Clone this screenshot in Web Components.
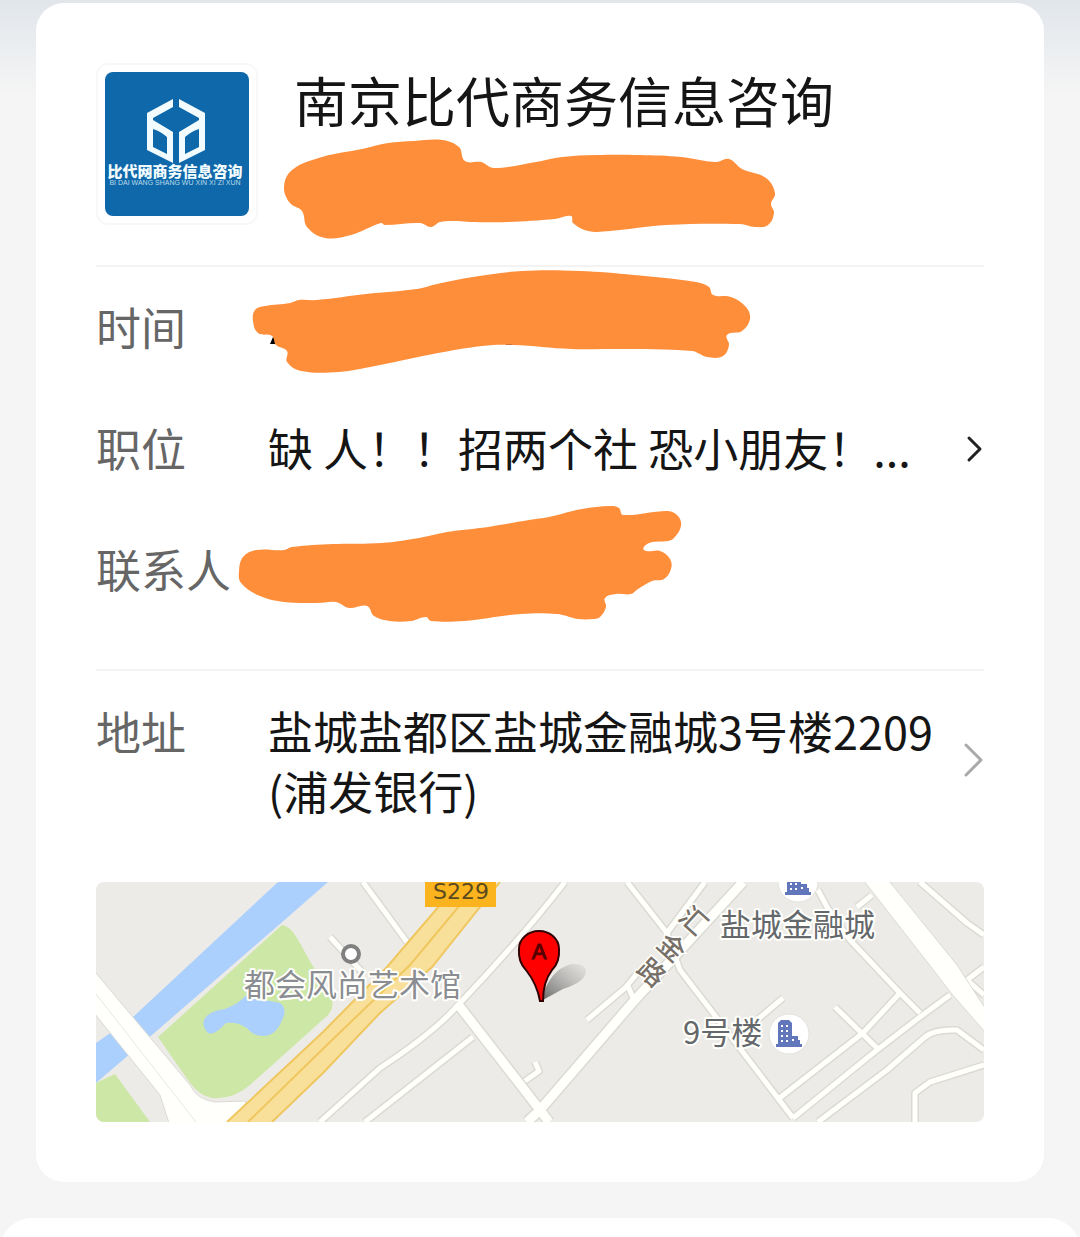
<!DOCTYPE html>
<html lang="zh-CN">
<head>
<meta charset="UTF-8">
<meta name="viewport" content="width=device-width, initial-scale=1">
<title>面试详情</title>
<style>
    body {
        margin: 0;
        background: #f5f5f5 linear-gradient(#e1e6eb, #f5f5f5 96px) no-repeat;
        color: #151515;
        font-family: "Noto Sans CJK SC", sans-serif;
    }
</style>
</head>
<body>
<interview-page></interview-page>

<script>
class CompanyLogo extends HTMLElement {
    constructor() {
        super();
        this.attachShadow({ mode: 'open' });
        this.shadowRoot.innerHTML = `
            <style>
                :host {
                    display: block;
                    box-sizing: border-box;
                    width: 162px;
                    height: 162px;
                    padding: 7px;
                    border: 2px solid #f8f8f8;
                    border-radius: 12px;
                    flex: none;
                }

                svg {
                    display: block;
                    width: 100%;
                    height: 100%;
                    border-radius: 8px;
                }
            </style>
            <svg viewBox="0 0 144 144">
                <rect width="144" height="144" fill="#0f68a9"/>
                <g fill="#f2fcff" fill-rule="evenodd">
                    <path d="M68 27V35L48 46V48L68 60V91L42 78V41ZM48 57V75L62 82V65Q55 59 48 57Z"/>
                    <path d="M74 27V35L94 46V48L74 60V91L100 78V41ZM94 57V75L80 82V65Q87 59 94 57Z"/>
                </g>
                <text x="70" y="105" text-anchor="middle" font-size="15" font-weight="900" fill="#f2fcff">比代网商务信息咨询</text>
                <text x="70" y="113" text-anchor="middle" font-family="Liberation Sans, sans-serif" font-size="7" fill="#b9dced">BI DAI WANG SHANG WU XIN XI ZI XUN</text>
            </svg>
        `;
    }
}

// Marker outlines: x,y pairs relative to the row that they cover
const SCRIBBLES = {
    company: [188,124, 196,107, 226,94, 266,86, 292,80, 318,78, 346,77, 363,84, 369,98, 385,99, 398,105, 440,99, 466,94, 500,92, 544,92, 585,94, 620,99, 633,96, 646,106, 670,115, 679,130, 675,141, 678,150, 672,162, 659,164, 644,161, 570,162, 514,168, 492,168, 477,160, 475,153, 459,156, 411,159, 374,159, 362,158, 344,159, 335,164, 324,160, 289,162, 285,160, 255,172, 229,175, 211,164, 206,148, 194,140],
    time: [157,22, 159,11, 169,7, 194,4, 203,1, 221,1, 270,-5, 321,-10, 341,-15, 377,-22, 426,-28, 484,-28, 538,-24, 600,-17, 613,-12, 617,-4, 635,-2, 650,8, 654,20, 646,32, 631,36, 633,46, 627,57, 611,58, 596,52, 520,50, 475,50, 417,46, 386,47, 337,55, 279,67, 243,73, 205,72, 191,63, 191,52, 180,46, 176,37, 162,34],
    contact: [143,30, 147,16, 160,9, 188,9, 196,6, 237,3, 286,2, 323,-3, 351,-9, 392,-14, 433,-21, 453,-24, 486,-32, 515,-35, 523,-33, 527,-26, 572,-30, 582,-25, 585,-15, 578,-3, 572,0, 553,2, 548,9, 564,10, 574,18, 575,28, 568,38, 556,40, 542,48, 535,53, 520,53, 509,57, 510,66, 504,76, 498,78, 482,78, 461,73, 425,73, 368,80, 335,80, 330,76, 315,80, 294,80, 278,75, 271,65, 253,67, 240,61, 221,62, 188,61, 164,55, 145,42]
};

class InkScribble extends HTMLElement {
    constructor() {
        super();
        this.attachShadow({ mode: 'open' });
    }

    connectedCallback() {
        const shape = this.getAttribute('shape');
        this.shadowRoot.innerHTML = `
            <style>
                :host {
                    display: block;
                    position: absolute;
                    top: 0;
                    left: 0;
                    pointer-events: none;
                }

                svg {
                    display: block;
                    width: 1px;
                    height: 1px;
                    overflow: visible;
                }
            </style>
            <svg aria-hidden="true">
                ${shape === 'time' ? '<path d="M174 45 177 38 186 45ZM410 44H418V46H410Z"/>' : ''}
                <path fill="#ff8e3a" d="${this.outline(SCRIBBLES[shape])}"/>
            </svg>
        `;
    }

    // closed smooth curve through all the points
    outline(flat) {
        const count = flat.length / 2;
        const at = i => {
            const k = (i + count) % count;
            return [flat[k * 2], flat[k * 2 + 1]];
        };
        const handle = (from, to, length) => {
            const dx = to[0] - from[0];
            const dy = to[1] - from[1];
            const k = length * 0.36 / Math.hypot(dx, dy);
            return [dx * k, dy * k];
        };
        let d = `M${at(0)}`;
        for (let i = 0; i < count; i++) {
            const [p0, p1, p2, p3] = [at(i - 1), at(i), at(i + 1), at(i + 2)];
            const length = Math.hypot(p2[0] - p1[0], p2[1] - p1[1]);
            const a = handle(p0, p2, length);
            const b = handle(p1, p3, length);
            d += `C${p1[0] + a[0]} ${p1[1] + a[1]} ${p2[0] - b[0]} ${p2[1] - b[1]} ${p2}`;
        }
        return d + 'Z';
    }
}

class InfoRow extends HTMLElement {
    constructor() {
        super();
        this.attachShadow({ mode: 'open' });
    }

    connectedCallback() {
        const href = this.getAttribute('href');
        const tag = href ? 'a' : 'div';
        this.shadowRoot.innerHTML = `
            <style>
                :host {
                    display: block;
                    position: relative;
                    font-size: 45px;
                    line-height: 60px;
                }

                .row {
                    display: flex;
                    color: inherit;
                    text-decoration: none;
                    min-height: 60px;
                }

                .label {
                    flex: none;
                    width: 172px;
                    color: #666;
                    white-space: nowrap;
                }

                .value {
                    flex: 1;
                    min-width: 0;
                }

                :host([single]) .value {
                    overflow: hidden;
                    white-space: nowrap;
                }

                svg {
                    flex: none;
                    align-self: center;
                    margin: 4px 0 0 24px;
                    fill: none;
                    stroke: #222;
                    stroke-width: 3;
                    stroke-linecap: round;
                    stroke-linejoin: round;
                }

                :host([muted]) svg {
                    stroke: #aaa;
                }

                ::slotted(ink-scribble) {
                    top: 2px;
                }
            </style>
            <${tag} class="row" ${href ? `href="${href}"` : ''}>
                <span class="label">${this.getAttribute('label')}</span>
                <span class="value"><slot></slot></span>
                ${href ? this.arrow() : ''}
            </${tag}>
            <slot name="cover"></slot>
        `;
    }

    arrow() {
        return this.hasAttribute('muted')
            ? '<svg width="20" height="40"><path d="M2 2 17 17 2 32"/></svg>'
            : '<svg width="20" height="32"><path d="M5 4 16 15 5 26"/></svg>';
    }
}

class AddressMap extends HTMLElement {
    constructor() {
        super();
        this.attachShadow({ mode: 'open' });
        this.shadowRoot.innerHTML = `
            <style>
                :host {
                    display: block;
                    height: 240px;
                    border-radius: 8px;
                    overflow: hidden;
                    background: #ecebe7;
                }

                svg {
                    display: block;
                    width: 100%;
                    height: 100%;
                }

                .edge, .road {
                    fill: none;
                    stroke-linejoin: round;
                }

                .edge {
                    stroke: #dcdad4;
                }

                .road {
                    stroke: #fffffc;
                }

                .place {
                    font-size: 31px;
                    stroke: #fffffc;
                    stroke-width: 4;
                    stroke-linejoin: round;
                    paint-order: stroke;
                }

                .street {
                    font-size: 27px;
                    font-weight: 500;
                    text-anchor: middle;
                    fill: #777069;
                    stroke: #fffffc;
                    stroke-width: 3;
                    paint-order: stroke;
                }
            </style>
            <svg viewBox="96 882 888 240" preserveAspectRatio="xMidYMid slice">
                <defs>
                    <linearGradient id="shade" x1="0" y1="1" x2="1" y2="0">
                        <stop offset="0" stop-color="#555" stop-opacity=".9"/>
                        <stop offset="1" stop-color="#999" stop-opacity=".1"/>
                    </linearGradient>
                    <g id="lanes">
                        <path d="M565 882Q520 940 460 1003Q435 1032 380 1068L320 1122"/>
                        <path d="M473 1037 365 1122"/>
                        <path d="M363 882 407 942"/>
                        <path d="M330 937 363 973"/>
                        <path d="M627 882 667 933 680 970 713 1013 793 1118"/>
                        <path d="M705 882 667 933"/>
                        <path d="M587 1020 625 988 640 970"/>
                        <path d="M627 984 634 1000"/>
                        <path d="M525 1081 539 1071 535 1062"/>
                        <path d="M920 882 967 923 984 935"/>
                        <path d="M818 890 827 907 850 940 900 993 920 1013"/>
                        <path d="M857 907 872 895"/>
                        <path d="M900 993 863 1033 777 1100"/>
                        <path d="M835 1007 877 1048"/>
                        <path d="M950 995 920 1017 877 1050 793 1118"/>
                        <path d="M818 1122 887 1070 925 1037Q934 1029 957 1030L984 1050"/>
                        <path d="M915 1122V1093L930 1082 984 1065"/>
                        <path d="M984 967 967 980 984 995"/>
                        <path d="M757 1020 783 998"/>
                    </g>
                    <g id="avenues">
                        <path d="M457 1003 540 1110 549 1122"/>
                        <path d="M527 1122 540 1110 633 1002 743 882"/>
                    </g>
                </defs>

                <path fill="#acd0fd" d="M278 882H328L280 924 152 1035 96 1083V1043L133 1017Z"/>
                <path fill="#cde7a6" d="M282 925Q290 926 297 938L332 1000Q334 1008 328 1015L250 1085Q232 1100 212 1098 200 1096 190 1083L158 1037Z"/>
                <path fill="#cde7a6" d="M96 1083 115 1074 150 1122H96Z"/>
                <path fill="#acd0fd" d="M204 1020Q208 1011 225 1009 240 1003 245 996L280 1003Q288 1009 282 1020 276 1036 263 1036 253 1036 247 1028 238 1022 226 1023 214 1036 208 1033 202 1027 204 1020Z"/>

                <g class="edge">
                    <use href="#lanes" stroke-width="8"/>
                    <use href="#avenues" stroke-width="12"/>
                </g>
                <g class="road">
                    <use href="#lanes" stroke-width="5"/>
                    <use href="#avenues" stroke-width="9"/>
                </g>
                <g fill="#fffffc" stroke="#dcdad4">
                    <path d="M95 972 190 1085Q197 1100 215 1102L246 1101 240 1123H169L160 1095 95 1014Z"/>
                    <path d="M864 881H889L957 965 985 1008V1032L951 993 935 972Z"/>
                </g>
                <path d="M96 994 196 1122" stroke="#e8e6e1"/>

                <path fill="#f8e09a" d="M227 1122 323 1032 387 967 440 905 500 882 432 967 380 1013 323 1073 272 1122Z"/>
                <g fill="none" stroke="#f0c75e" stroke-width="2">
                    <path d="M227 1122 323 1032 387 967 440 905"/>
                    <path d="M272 1122 323 1073 380 1013 432 967 500 882"/>
                    <path d="M248 1122 330 1042 410 965 460 905"/>
                </g>
                <rect x="425" y="874" width="71" height="33" fill="#fbb41d"/>
                <text x="461" y="899" text-anchor="middle" font-family="DejaVu Sans, sans-serif" font-size="22" fill="#5b4a1d">S229</text>

                <text class="street" transform="translate(693 921) rotate(42)" y="9">汇</text>
                <text class="street" transform="translate(671 948) rotate(42)" y="9">金</text>
                <text class="street" transform="translate(651 973) rotate(42)" y="9">路</text>

                <circle cx="351" cy="954" r="8" fill="#fff" stroke="#808080" stroke-width="4"/>
                <text class="place" x="244" y="996" fill="#8a8d91">都会风尚艺术馆</text>

                <g id="tower">
                    <circle cx="789" cy="1034" r="20" fill="#fff" stroke="#e3e1dc"/>
                    <path fill="#6276bb" d="M778 1023 781 1020H789L792 1023V1036H798V1040H800V1044H802V1047H776V1044H778Z"/>
                    <path stroke="#fff" stroke-width="2" stroke-dasharray="2 3" d="M782 1025V1042M787 1025V1042M793 1039V1043"/>
                </g>
                <use href="#tower" x="9" y="-152"/>
                <text class="place" x="720" y="936" fill="#65686b">盐城金融城</text>
                <text class="place" x="683" y="1044" fill="#65686b">9号楼</text>

                <path fill="url(#shade)" d="M541 1001Q549 970 571 964 586 963 586 972 585 982 563 989Z"/>
                <path fill="#f00" stroke="#300" stroke-width="2" d="M540 1001Q537 984 526 970 518 962 519 949A20 18 0 0 1 559 949Q560 962 552 970 543 982 543 1001Z"/>
                <text x="539" y="959" text-anchor="middle" font-family="Liberation Sans, sans-serif" font-size="22" fill="#500" stroke="#500">A</text>
            </svg>
        `;
    }
}

class InterviewPage extends HTMLElement {
    constructor() {
        super();
        this.attachShadow({ mode: 'open' });
        this.shadowRoot.innerHTML = `
            <style>
                :host {
                    display: flex;
                    flex-direction: column;
                    box-sizing: border-box;
                    min-height: 100vh;
                    padding-top: 3px;
                }

                main {
                    margin: 0 36px 36px;
                    padding: 60px;
                    background: #fff;
                    border-radius: 28px;
                }

                header {
                    position: relative;
                    display: flex;
                    gap: 36px;
                    padding-bottom: 40px;
                }

                h1 {
                    margin: 5px 0 0;
                    font-size: 54px;
                    font-weight: 400;
                    line-height: 64px;
                }

                section {
                    display: flex;
                    flex-direction: column;
                    gap: 61px;
                    padding: 30px 0 70px;
                    border-top: 2px solid #f3f3f3;
                }

                .place {
                    padding-bottom: 0;
                }

                /* top of the next panel, cut by the window */
                .next {
                    position: relative;
                    flex: 1;
                    overflow: hidden;
                }

                .next::before {
                    content: "";
                    position: absolute;
                    top: 0;
                    left: 0;
                    right: 0;
                    height: 100vh;
                    background: #fff;
                    border-radius: 32px 32px 0 0;
                }
            </style>
            <main>
                <header>
                    <company-logo></company-logo>
                    <h1>南京比代商务信息咨询</h1>
                    <ink-scribble shape="company"></ink-scribble>
                </header>
                <section>
                    <info-row label="时间"><ink-scribble slot="cover" shape="time"></ink-scribble></info-row>
                    <info-row label="职位" href="#job" single>缺 人！！招两个社 恐小朋友！...</info-row>
                    <info-row label="联系人"><ink-scribble slot="cover" shape="contact"></ink-scribble></info-row>
                </section>
                <section class="place">
                    <info-row label="地址" href="#map" muted>盐城盐都区盐城金融城3号楼2209 (浦发银行)</info-row>
                    <address-map></address-map>
                </section>
            </main>
            <div class="next"></div>
        `;
    }
}

customElements.define('company-logo', CompanyLogo);
customElements.define('ink-scribble', InkScribble);
customElements.define('info-row', InfoRow);
customElements.define('address-map', AddressMap);
customElements.define('interview-page', InterviewPage);
</script>
</body>
</html>
